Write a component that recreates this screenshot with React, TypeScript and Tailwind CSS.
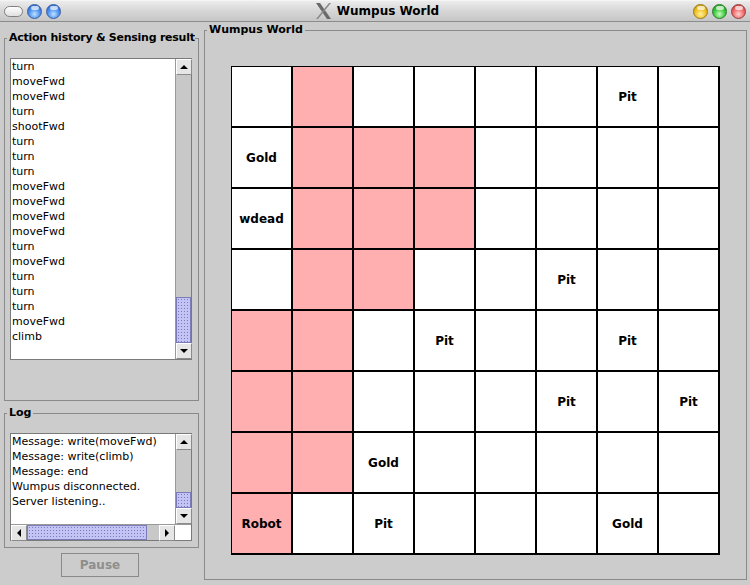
import React from "react";

const actions = [
  "turn", "moveFwd", "moveFwd", "turn", "shootFwd", "turn", "turn", "turn",
  "moveFwd", "moveFwd", "moveFwd", "moveFwd", "turn", "moveFwd", "turn", "turn",
  "turn", "moveFwd", "climb",
];

const logs = [
  "Message: write(moveFwd)",
  "Message: write(climb)",
  "Message: end",
  "Wumpus disconnected.",
  "Server listening..",
];

const pinkMap = [
  "01000000",
  "01110000",
  "01110000",
  "01100000",
  "11000000",
  "11000000",
  "11000000",
  "10000000",
];

const labels: Record<string, string> = {
  "0,6": "Pit",
  "1,0": "Gold",
  "2,0": "wdead",
  "3,5": "Pit",
  "4,3": "Pit",
  "4,6": "Pit",
  "5,5": "Pit",
  "5,7": "Pit",
  "6,2": "Gold",
  "7,0": "Robot",
  "7,2": "Pit",
  "7,6": "Gold",
};

function Arrow({ dir }: { dir: "up" | "down" | "left" | "right" }) {
  const pts =
    dir === "up"
      ? "0,4 8,4 4,0"
      : dir === "down"
      ? "0,0 8,0 4,4"
      : dir === "left"
      ? "4,0 4,8 0,4"
      : "0,0 0,8 4,4";
  const w = dir === "up" || dir === "down" ? 8 : 4;
  const h = dir === "up" || dir === "down" ? 4 : 8;
  return (
    <svg width={w} height={h} viewBox={`0 0 ${w} ${h}`}>
      <polygon points={pts} fill="#000" />
    </svg>
  );
}

function ScrollBtn({ dir }: { dir: "up" | "down" | "left" | "right" }) {
  return (
    <div className="w-[16px] h-[16px] shrink-0 bg-[#e6e6e6] border border-t-white border-l-white border-r-[#8a8a8a] border-b-[#8a8a8a] flex items-center justify-center">
      <Arrow dir={dir} />
    </div>
  );
}

const thumbCls =
  "bg-[#c4c4f4] bg-[radial-gradient(circle,#7a7ac4_0.6px,transparent_0.9px)] bg-[length:3px_3px] border border-[#7b7bb8]";

function VScroll({ track, thumb }: { track: number; thumb: number }) {
  return (
    <div className="w-[16px] flex flex-col shrink-0 bg-[#c8c8c8] border-l border-[#9a9a9a]">
      <ScrollBtn dir="up" />
      <div className="bg-[#c8c8c8]" style={{ height: track }} />
      <div className={thumbCls} style={{ height: thumb }} />
      <ScrollBtn dir="down" />
    </div>
  );
}

function Dot({ color }: { color: string }) {
  const map: Record<string, string> = {
    blue: "bg-[radial-gradient(circle_at_50%_70%,#bfe2ff_0%,#4a8ff0_50%,#1d58c0_100%)] border-[#3a5f9e]",
    yellow: "bg-[radial-gradient(circle_at_50%_70%,#fff2a0_0%,#f0c020_50%,#b88a00_100%)] border-[#9a7a10]",
    green: "bg-[radial-gradient(circle_at_50%_70%,#c8ffc0_0%,#3cc83c_50%,#1c8a1c_100%)] border-[#2a7a2a]",
    red: "bg-[radial-gradient(circle_at_50%_70%,#ffd0d0_0%,#f06a6a_50%,#b83434_100%)] border-[#9a3a3a]",
  };
  return (
    <div className={`w-[15px] h-[15px] rounded-full border ${map[color]} flex justify-center`}>
      <div className="mt-[1px] w-[8px] h-[4px] rounded-full bg-white/70" />
    </div>
  );
}

function XLogo() {
  return (
    <svg width="17" height="16" viewBox="0 0 17 16">
      <polygon points="1,0 5,0 16,16 12,16" fill="#6a6a6a" />
      <polygon points="14,0 16,0 3,16 1,16" fill="#8a8a8a" />
    </svg>
  );
}

export default function App() {
  return (
    <div
      className="w-[750px] h-[585px] bg-[#cccccc] overflow-hidden flex flex-col text-black"
      style={{ fontFamily: '"DejaVu Sans", "Liberation Sans", sans-serif' }}
    >
      {/* Title bar */}
      <div className="h-[22px] shrink-0 flex items-center bg-gradient-to-b from-[#ececec] via-[#d6d6d6] to-[#c6c6c6] border-b border-[#8c8c8c] border-t border-t-[#f4f4f4]">
        <div className="flex items-center pl-[4px] w-[61px]">
          <div className="w-[19px] h-[11px] rounded-full border border-[#808080] bg-gradient-to-b from-white to-[#e0e0e0]" />
          <div className="ml-[4px]">
            <Dot color="blue" />
          </div>
          <div className="ml-[4px]">
            <Dot color="blue" />
          </div>
        </div>
        <div className="flex-1 flex items-center justify-center gap-[5px]">
          <XLogo />
          <span className="text-[12px] font-bold leading-none">Wumpus World</span>
        </div>
        <div className="flex items-center gap-[4px] pr-[4px]">
          <Dot color="yellow" />
          <Dot color="green" />
          <Dot color="red" />
        </div>
      </div>

      {/* Body */}
      <div className="flex pl-[4px] pr-[3px]">
        {/* Left column */}
        <div className="w-[195px] shrink-0 flex flex-col pt-[9px]">
          <fieldset className="h-[370px] border border-[#8a8a8a]">
            <legend className="ml-[2px] pl-[2px] w-[188px] overflow-hidden whitespace-nowrap text-[11px] font-bold leading-[14px] tracking-[-0.25px]">
              Action history &amp; Sensing result
            </legend>
            <div className="pl-[5px] pt-[13px]">
              <div className="w-[182px] h-[302px] border border-[#7a7a7a] bg-white flex">
                <div className="flex-1 pl-[1px] text-[11px] leading-[15px]">
                  {actions.map((a, i) => (
                    <div key={i}>{a}</div>
                  ))}
                </div>
                <VScroll track={222} thumb={46} />
              </div>
            </div>
          </fieldset>

          <fieldset className="mt-[5px] h-[142px] border border-[#8a8a8a]">
            <legend className="ml-[2px] px-[2px] text-[11px] font-bold leading-[14px]">Log</legend>
            <div className="pl-[5px] pt-[13px]">
              <div className="w-[182px] h-[108px] border border-[#7a7a7a] bg-white flex flex-col">
                <div className="flex h-[90px]">
                  <div className="flex-1 pl-[1px] text-[11px] leading-[15px] whitespace-nowrap overflow-hidden">
                    {logs.map((l, i) => (
                      <div key={i}>{l}</div>
                    ))}
                  </div>
                  <VScroll track={42} thumb={16} />
                </div>
                <div className="flex h-[16px] bg-[#c8c8c8] border-t border-[#9a9a9a]">
                  <ScrollBtn dir="left" />
                  <div className={`w-[120px] ${thumbCls}`} />
                  <div className="w-[12px]" />
                  <ScrollBtn dir="right" />
                  <div className="w-[16px] bg-white" />
                </div>
              </div>
            </div>
          </fieldset>

          <div className="mt-[5px] ml-[57px] w-[78px] h-[24px] border border-[#8a8a8a] flex items-center justify-center text-[12px] font-bold text-[#8e8e8e]">
            Pause
          </div>
        </div>

        {/* Right panel */}
        <fieldset className="ml-[5px] mt-[1px] w-[543px] h-[557px] border border-[#8a8a8a]">
          <legend className="ml-[2px] px-[2px] text-[11px] font-bold leading-[14px]">Wumpus World</legend>
          <div className="pl-[26px] pt-[29px]">
            <div className="w-fit grid grid-cols-[repeat(8,59px)] grid-rows-[repeat(8,59px)] gap-[2px] bg-black pl-[1px] pt-[1px] pr-[2px] pb-[2px]">
              {pinkMap.map((row, r) =>
                row.split("").map((c, col) => (
                  <div
                    key={`${r}-${col}`}
                    className={`flex items-center justify-center text-[12px] font-bold ${
                      c === "1" ? "bg-[#ffafaf]" : "bg-white"
                    }`}
                  >
                    {labels[`${r},${col}`] ?? ""}
                  </div>
                ))
              )}
            </div>
          </div>
        </fieldset>
      </div>
    </div>
  );
}
